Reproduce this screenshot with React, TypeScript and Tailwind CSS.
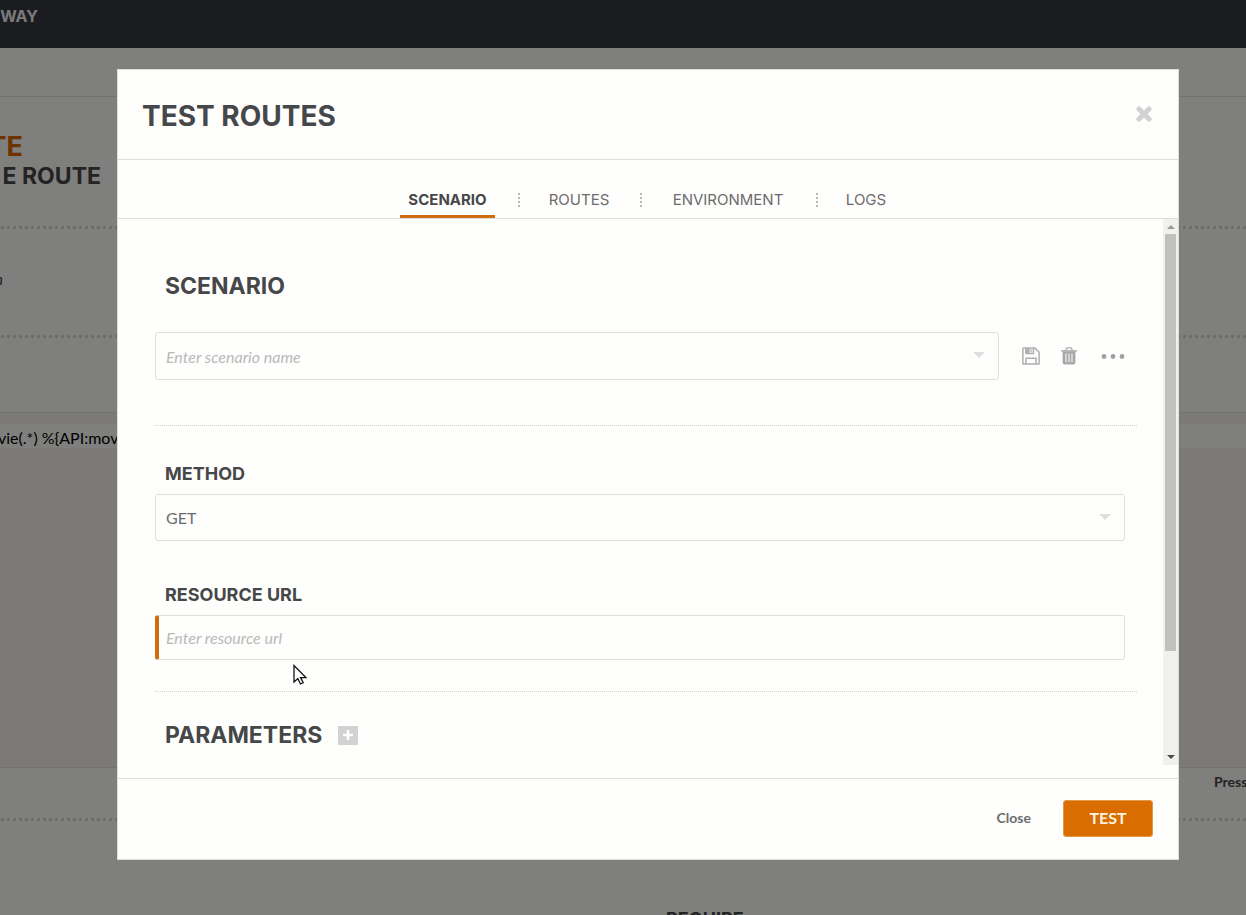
import { useState } from "react";

const heading = "font-['Inter',sans-serif] font-bold text-[#464748]";

function DottedRule({ className = "" }: { className?: string }) {
  return (
    <div
      className={`h-[3px] bg-[repeating-linear-gradient(90deg,transparent_0_1px,#dadad8_1px_4px,transparent_4px_6px)] ${className}`}
    />
  );
}

function Caret({ className = "" }: { className?: string }) {
  return (
    <svg viewBox="0 0 12 6" className={`pointer-events-none absolute h-1.5 w-3 fill-[#dfdfdf] ${className}`} aria-hidden="true">
      <path d="M0 0h12L6 6z" />
    </svg>
  );
}

function SaveIcon() {
  return (
    <svg viewBox="0 0 18 18" className="size-[18px]" fill="none" stroke="#b0b0b0" strokeWidth="1.5" aria-hidden="true">
      <path d="M1.7.9h11l4.4 4.4v11.8H.9V1.7q0-.8.8-.8z" strokeLinejoin="round" />
      <path d="M3.8 1v5.6h7.6V1M4 17v-5.8h10V17" />
      <path d="M4 1.2h3.6v5H4z" fill="#b0b0b0" stroke="none" />
      <path d="M9 2v3.2" strokeWidth="1.2" />
    </svg>
  );
}

function TrashIcon() {
  return (
    <svg viewBox="0 0 16 18" className="h-[18px] w-4" fill="none" aria-hidden="true">
      <path d="M4.7 3.4l.8-2q.2-.6.8-.6h3.4q.6 0 .8.6l.8 2" stroke="#a8a8a8" strokeWidth="1.3" />
      <path d="M.2 3.2h15.6v1.5H.2z" fill="#a8a8a8" />
      <path d="M1.6 4.6h12.8v11q0 1.8-1.8 1.8H3.4q-1.8 0-1.8-1.8z" fill="#a8a8a8" />
      <path d="M5 6.4v8.8M8 6.4v8.8M11 6.4v8.8" stroke="#fefefd" strokeWidth="1" />
    </svg>
  );
}

function MoreIcon() {
  return (
    <svg viewBox="0 0 24 6" className="h-1.5 w-6 fill-[#a0a0a0]" aria-hidden="true">
      <circle cx="3" cy="3.5" r="2.4" />
      <circle cx="12" cy="3.5" r="2.4" />
      <circle cx="21" cy="3.5" r="2.4" />
    </svg>
  );
}

function Page() {
  return (
    <div className="flex h-screen flex-col overflow-hidden bg-[#fffefb] font-['Lato',sans-serif] whitespace-nowrap">
      <header className="h-12 shrink-0 bg-[#36383f]">
        <div className="flex w-[38px] justify-end overflow-hidden pt-1.5 font-['Inter',sans-serif] text-base leading-5 font-bold text-[#f4f4f4]">
          WAY
        </div>
      </header>
      <div className="h-[49px] shrink-0 border-b border-[#e4e4e2]" />
      <div className="h-[129px] shrink-0 pt-[35px] font-['Inter',sans-serif] font-bold">
        <div className="flex w-[23px] justify-end overflow-hidden text-[27px] leading-[30px] text-[#d96b00]">TE</div>
        <div className="flex w-[101px] justify-end overflow-hidden text-[23px] leading-[28px] text-[#464748]">E ROUTE</div>
      </div>
      <DottedRule className="shrink-0" />
      <div className="h-[106px] shrink-0 pt-[38px]">
        <div className="flex w-[3px] justify-end overflow-hidden text-base leading-6 text-[#464748] italic">n</div>
      </div>
      <DottedRule className="shrink-0" />
      <div className="h-[74px] shrink-0" />
      <div className="h-[356px] shrink-0 border-y border-[#e4e4e2] bg-[#f6f5ef] pt-[11px]">
        <div className="-ml-0.5 h-6 bg-[#fffefd] text-base leading-7 text-black">vie(.*) %&#123;API:mov</div>
      </div>
      <div className="flex h-[50px] shrink-0 justify-end overflow-hidden">
        <div className="w-8 pt-1 text-sm leading-5 font-bold text-[#464748]">Press</div>
      </div>
      <DottedRule className="shrink-0" />
      <div className="pt-[86px] pl-[666px] font-['Inter',sans-serif] text-lg leading-6 font-bold text-[#464748]">REQUIRE</div>
    </div>
  );
}

const tabs = [
  { name: "SCENARIO", width: "w-[95px]" },
  { name: "ROUTES", width: "w-[76px]" },
  { name: "ENVIRONMENT", width: "w-[130px]" },
  { name: "LOGS", width: "w-[54px]" },
];

function Tabs() {
  const [active, setActive] = useState("SCENARIO");
  return (
    <nav role="tablist" className="flex h-[59px] shrink-0 items-end justify-center border-b border-[#dededd] pr-[3px]">
      {tabs.map((tab, i) => (
        <div key={tab.name} className="flex items-end">
          {i > 0 && (
            <div className="mr-[21px] mb-[11px] ml-[23px] h-[14px] w-0.5 bg-[repeating-linear-gradient(180deg,#b8b8b8_0_2px,transparent_2px_4px)]" />
          )}
          <button
            role="tab"
            aria-selected={active === tab.name}
            onClick={() => setActive(tab.name)}
            className={`h-9 border-b-[3px] pt-0.5 font-['Inter',sans-serif] text-[15px] leading-5 ${tab.width} ${
              active === tab.name ? "border-[#cf6c0f] font-bold text-[#464748]" : "border-transparent text-[#6c6c6c]"
            }`}
          >
            {tab.name}
          </button>
        </div>
      ))}
    </nav>
  );
}

const field =
  "block w-full rounded-[3px] border border-[#dfdfdf] bg-transparent px-2.5 text-base outline-none placeholder:text-[#b9b9b9] placeholder:italic";

function ScenarioForm() {
  return (
    <form id="scenario" className="min-w-0 flex-1 overflow-hidden pr-[26px] pl-[37px]" onSubmit={(e) => e.preventDefault()}>
      <h2 className={`${heading} pt-[51px] pl-2.5 text-[23px] leading-8`}>SCENARIO</h2>
      <div className="mt-[30px] flex items-center pr-3">
        <div className="relative flex-1">
          <input aria-label="Scenario name" placeholder="Enter scenario name" className={`${field} h-12`} />
          <Caret className="top-5 right-[14px]" />
        </div>
        <div className="ml-[23px] flex items-center">
          <button type="button" aria-label="Save scenario"><SaveIcon /></button>
          <button type="button" aria-label="Delete scenario" className="ml-[21px]"><TrashIcon /></button>
          <button type="button" aria-label="More actions" className="ml-6"><MoreIcon /></button>
        </div>
      </div>
      <div className="mt-[45px] border-t border-dotted border-[#d4d4d4]" />
      <label htmlFor="method" className={`${heading} mt-9 block pl-2.5 text-lg leading-6`}>METHOD</label>
      <div className="relative mt-2 mr-3">
        <select id="method" className={`${field} h-[47px] appearance-none text-[#6c6c6c]`}>
          <option>GET</option>
          <option>POST</option>
          <option>PUT</option>
          <option>DELETE</option>
        </select>
        <Caret className="top-5 right-[14px]" />
      </div>
      <label htmlFor="resource" className={`${heading} mt-[42px] block pl-2.5 text-lg leading-6`}>RESOURCE URL</label>
      <div className="mt-2 mr-3">
        <input id="resource" placeholder="Enter resource url" className={`${field} h-[45px] border-l-4 border-l-[#cf6c0f] pl-[7px]`} />
      </div>
      <div className="mt-[31px] border-t border-dotted border-[#d4d4d4]" />
      <div className="mt-[27px] flex items-center pl-2.5">
        <h2 className={`${heading} w-[173px] text-[23px] leading-8`}>PARAMETERS</h2>
        <button type="button" aria-label="Add parameter" className="flex h-[19px] w-5 items-center justify-center bg-[#d2d2d2]">
          <svg viewBox="0 0 10 10" className="size-2.5 stroke-[#fefefd]" strokeWidth="2.6" aria-hidden="true">
            <path d="M5 0v10M0 5h10" />
          </svg>
        </button>
      </div>
    </form>
  );
}

function Scrollbar() {
  return (
    <div className="flex w-[15px] flex-col items-center bg-[#f0f0ef]" aria-hidden="true">
      <div className="flex h-[15px] items-center">
        <svg viewBox="0 0 8 4" className="h-1 w-2 fill-[#9a9a9a]"><path d="M4 0l4 4H0z" /></svg>
      </div>
      <div className="w-full flex-1 px-0.5">
        <div className="h-[81%] bg-[#c0c0be]" />
      </div>
      <div className="flex h-4 items-center">
        <svg viewBox="0 0 8 4" className="h-1 w-2 fill-[#4a4a4a]"><path d="M0 0h8L4 4z" /></svg>
      </div>
    </div>
  );
}

export default function App() {
  return (
    <div className="relative">
      <Page />
      <div className="fixed inset-0 overflow-hidden bg-black/50 pt-[69px] pr-[67px] pl-[117px]">
        <div
          role="dialog"
          aria-modal="true"
          aria-labelledby="dialog-title"
          className="flex flex-col border border-[#dededd] bg-[#fefefd] font-['Lato',sans-serif]"
        >
          <header className="flex h-[90px] shrink-0 items-center justify-between border-b border-[#dededd] pr-[26px] pl-6">
            <h1 id="dialog-title" className={`${heading} pt-0.5 text-[28px] leading-9`}>TEST ROUTES</h1>
            <button aria-label="Close dialog" className="pb-0.5">
              <svg viewBox="0 0 16 16" className="size-4 stroke-[#d2d2d2]" strokeWidth="5" strokeLinecap="round" aria-hidden="true">
                <path d="M3 3l10 10M13 3L3 13" />
              </svg>
            </button>
          </header>
          <Tabs />
          <div className="flex h-[546px]">
            <ScenarioForm />
            <Scrollbar />
          </div>
          <footer className="mt-[13px] flex h-[81px] shrink-0 items-center justify-end gap-8 border-t border-[#dededd] pr-[25px] pb-0.5">
            <button className="text-sm leading-5 font-bold text-[#6c6c6c]">Close</button>
            <button className="h-[37px] w-[90px] rounded-[3px] border border-[#e39a48] bg-[#d96d00] text-base font-bold text-[#fff3e0]">
              TEST
            </button>
          </footer>
        </div>
        <svg viewBox="0 0 14 22" className="pointer-events-none absolute top-[664px] left-[293px] h-[22px] w-3.5" aria-hidden="true">
          <path d="M1 1.5v16.6l3.9-3.5 2.6 5.4 2.7-1.2-2.6-5.2h5.3z" fill="#fff" stroke="#111" strokeWidth="1.3" />
        </svg>
      </div>
    </div>
  );
}
